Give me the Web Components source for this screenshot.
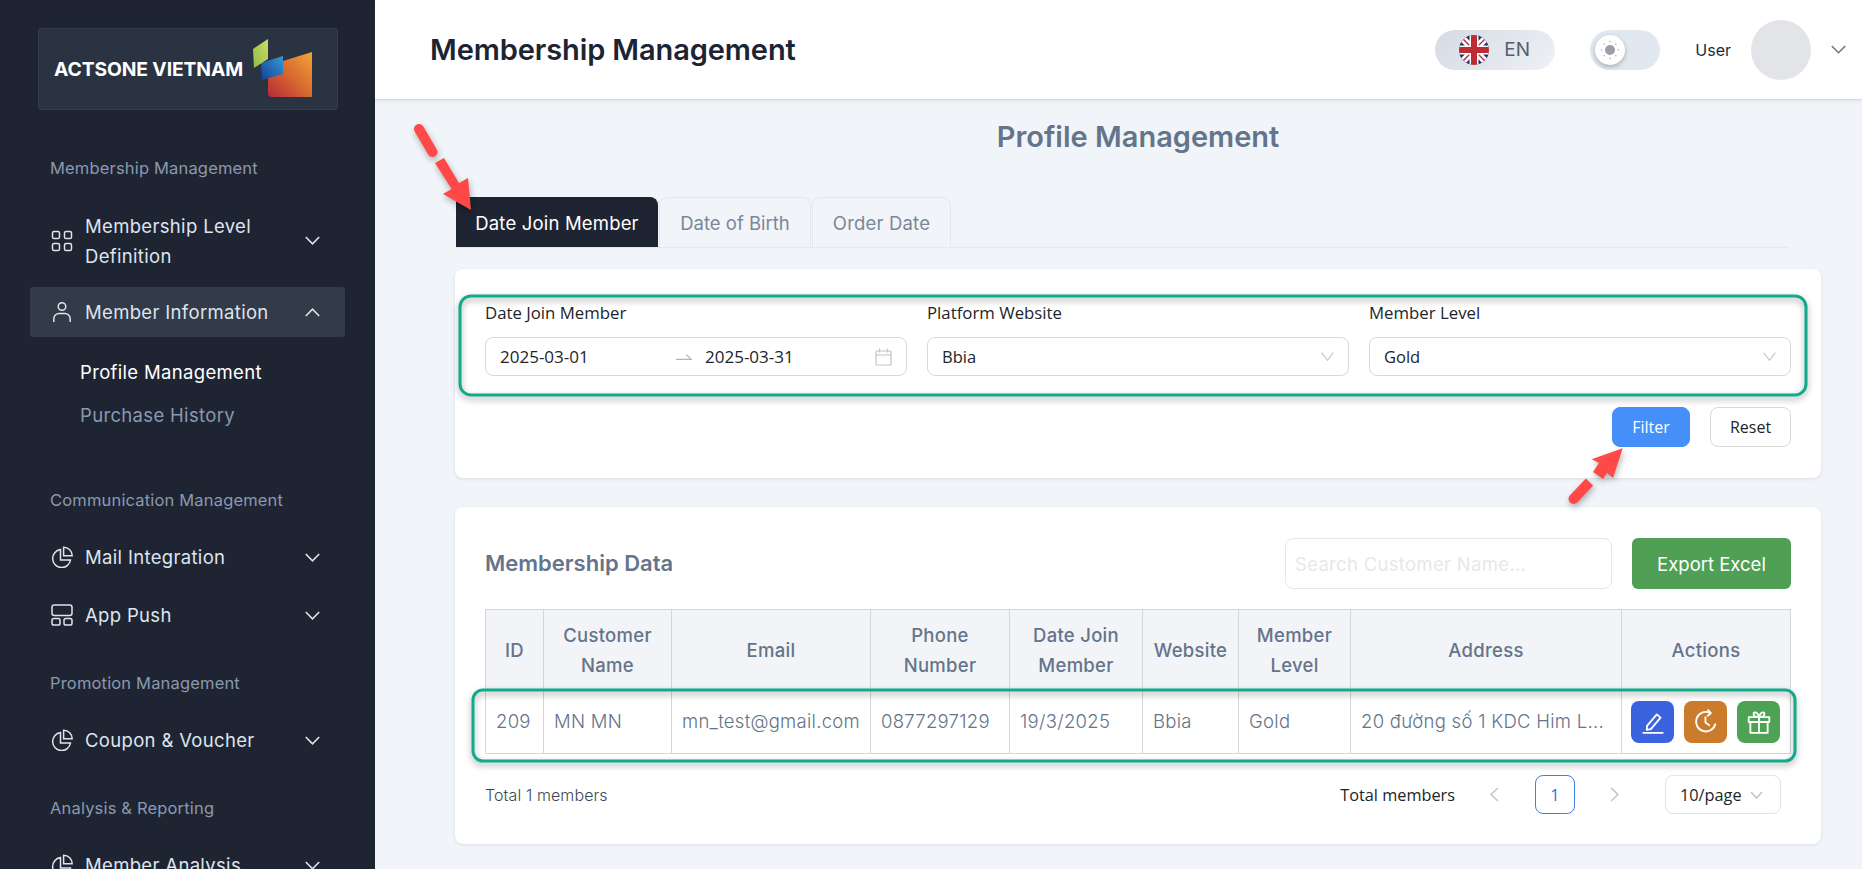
<!DOCTYPE html>
<html lang="en">
<head>
<meta charset="utf-8">
<title>Membership Management</title>
<style>
  html, body { margin: 0; height: 100%; overflow: hidden; background: #f1f5f9; }
  body { font-family: Inter, "Liberation Sans", sans-serif; }
</style>
</head>
<body>
<app-shell>
  <app-sidebar slot="sidebar"></app-sidebar>
  <app-header slot="header" heading="Membership Management"></app-header>
  <profile-page></profile-page>
  <red-marks slot="overlay"></red-marks>
</app-shell>

<script>
const ICONS = {
  grid: '<rect x="1.5" y="1.5" width="7" height="7" rx="1.6"/><rect x="13.5" y="1.5" width="7" height="7" rx="1.6"/><rect x="1.5" y="13.5" width="7" height="7" rx="1.6"/><rect x="13.5" y="13.5" width="7" height="7" rx="1.6"/>',
  user: '<circle cx="11" cy="5.5" r="3.8"/><path d="M2.8 21v-3.2c0-3 2.4-5.3 5.3-5.3h5.8c2.9 0 5.3 2.3 5.3 5.3V21"/>',
  pie: '<path d="M9.5 3.6a9 9 0 1 0 10 10.4h-10z"/><path d="M12.6 1.2v8.6h8.6a8.6 8.6 0 0 0-8.6-8.6z"/>',
  layout: '<rect x="1" y="1" width="20" height="10.5" rx="2.2"/><rect x="1" y="14.6" width="8" height="6.4" rx="1.8"/><rect x="13" y="14.6" width="8" height="6.4" rx="1.8"/>'
};

class AppShell extends HTMLElement {
  constructor() {
    super();
    this.attachShadow({ mode: "open" }).innerHTML = `
      <style>
        :host { display: grid; grid-template-columns: 375px 1fr; grid-template-rows: 100px 1fr; width: 1862px; height: 869px; overflow: hidden; position: relative; }
        .side { grid-row: 1 / 3; overflow: hidden; }
        .main { overflow: hidden; }
      </style>
      <div class="side"><slot name="sidebar"></slot></div>
      <slot name="header"></slot>
      <div class="main"><slot></slot></div>
      <slot name="overlay"></slot>`;
  }
}

class NavItem extends HTMLElement {
  constructor() {
    super();
    this.attachShadow({ mode: "open" });
  }
  connectedCallback() {
    const open = this.hasAttribute("open");
    const icon = ICONS[this.getAttribute("icon")] || "";
    this.shadowRoot.innerHTML = `
      <style>
        :host { display: flex; align-items: center; box-sizing: border-box; min-height: 50px; padding: 0 25px 0 21px; border-radius: 3px; color: #dee4ee; font-size: 18.5px; letter-spacing: .33px; line-height: 30px; }
        :host([open]) { background: #333a48; }
        svg.ic { width: 22px; height: 22px; flex: none; margin-right: 12px; fill: none; stroke: #dee4ee; stroke-width: 1.5; }
        .t { flex: 1; max-width: 195px; }
        svg.ch { margin-left: auto; width: 15px; height: 9px; flex: none; fill: none; stroke: #dee4ee; stroke-width: 1.6; }
      </style>
      <svg class="ic" viewBox="0 0 22 22">${icon}</svg>
      <span class="t"><slot></slot></span>
      <svg class="ch" viewBox="0 0 15 9"><path d="${open ? "M.8 8 7.5 1.2 14.2 8" : "M.8 1 7.5 7.8 14.2 1"}"/></svg>`;
  }
}

class AppSidebar extends HTMLElement {
  constructor() {
    super();
    this.attachShadow({ mode: "open" }).innerHTML = `
      <style>
        :host { display: block; height: 869px; background: #1f2433; color: #8a99af; overflow: hidden; }
        .logo { box-sizing: border-box; margin: 28px 37px 0 38px; height: 82px; background: #2a3342; border: 1px solid #333d4d; border-radius: 3px; display: flex; align-items: center; justify-content: space-between; padding: 0 25px 0 15px; }
        .logo b { color: #fff; font-size: 19.3px; font-weight: 700; letter-spacing: -.1px; white-space: nowrap; }
        .logo svg { width: 60px; height: 60px; flex: none; }
        nav { padding: 0 30px; }
        h3 { margin: 31px 0 20px; padding-left: 20px; font-size: 16.5px; letter-spacing: .17px; font-weight: 400; line-height: 24px; color: #8a99af; }
        h3.first { margin-top: 46px; margin-bottom: 23px; }
        h3.comm { margin-top: 60px; }
        nav-item.two { min-height: 75px; }
        nav-item.active { margin-top: 9px; }
        nav-item.next { margin-top: 8px; }
        .sub { padding: 22px 0 0 50px; display: grid; gap: 17px; font-size: 18.5px; letter-spacing: .33px; line-height: 26px; }
        .sub .on { color: #fff; }
      </style>
      <div class="logo">
        <b>ACTSONE VIETNAM</b>
        <svg viewBox="0 0 60 60" aria-hidden="true">
          <defs>
            <linearGradient id="lg" x1="1" y1="0" x2="0" y2="1"><stop offset="0" stop-color="#cfdc62"/><stop offset="1" stop-color="#8dbd4b"/></linearGradient>
            <linearGradient id="lb" x1="1" y1="0" x2="0" y2="1"><stop offset="0" stop-color="#339ad6"/><stop offset="1" stop-color="#173f96"/></linearGradient>
            <linearGradient id="lo" x1="1" y1="0" x2="0" y2="1"><stop offset="0" stop-color="#f2a53a"/><stop offset=".5" stop-color="#d8692f"/><stop offset="1" stop-color="#b42a36"/></linearGradient>
          </defs>
          <path d="M31 22 60 13V58H20a4 4 0 0 1-4-4V39z" fill="url(#lo)"/>
          <path d="M9 24 31 17V35L10 41z" fill="url(#lb)"/>
          <path d="M1 10 16 0V20L2 29z" fill="url(#lg)"/>
        </svg>
      </div>
      <nav>
        <h3 class="first">Membership Management</h3>
        <nav-item class="two" icon="grid">Membership Level Definition</nav-item>
        <nav-item class="active" icon="user" open>Member Information</nav-item>
        <div class="sub"><span class="on">Profile Management</span><span>Purchase History</span></div>
        <h3 class="comm">Communication Management</h3>
        <nav-item icon="pie">Mail Integration</nav-item>
        <nav-item class="next" icon="layout">App Push</nav-item>
        <h3>Promotion Management</h3>
        <nav-item icon="pie">Coupon &amp; Voucher</nav-item>
        <h3>Analysis &amp; Reporting</h3>
        <nav-item icon="pie">Member Analysis</nav-item>
      </nav>`;
  }
}

class AppHeader extends HTMLElement {
  constructor() {
    super();
    this.attachShadow({ mode: "open" });
  }
  connectedCallback() {
    this.shadowRoot.innerHTML = `
      <style>
        :host { display: flex; align-items: center; box-sizing: border-box; height: 100px; padding: 0 16px 0 55px; background: #fff; border-bottom: 1px solid #d5dbe3; box-shadow: 0 1px 3px rgba(100,116,139,.15); position: relative; }
        h1 { margin: 0; font-size: 29px; font-weight: 600; color: #1c2434; flex: 1; letter-spacing: -.1px; }
        .lang { box-sizing: border-box; width: 120px; height: 40px; border-radius: 20px; background: linear-gradient(135deg,#d5dae3,#eef1f5); display: flex; align-items: center; gap: 15px; padding-left: 24px; color: #555e6e; font-size: 19px; margin-right: 35px; }
        .lang svg { width: 30px; height: 30px; border-radius: 50%; }
        .toggle { box-sizing: border-box; width: 70px; height: 40px; border-radius: 20px; background: #e2e8f0; padding: 5px; margin-right: 35px; }
        .knob { width: 30px; height: 30px; border-radius: 50%; background: #fff; box-shadow: 0 2px 5px rgba(0,0,0,.25); display: flex; align-items: center; justify-content: center; }
        .user { font-size: 16px; color: #212b3d; margin-right: 20px; }
        .avatar { width: 60px; height: 60px; border-radius: 50%; background: #e2e4e8; margin-right: 20px; }
        .chev { width: 15px; height: 9px; fill: none; stroke: #64748b; stroke-width: 1.5; }
      </style>
      <h1>${this.getAttribute("heading")}</h1>
      <div class="lang">
        <svg viewBox="0 0 30 30" aria-hidden="true">
          <rect width="30" height="30" fill="#1a2a6c"/>
          <path d="M0 2 28 30M2 0 30 28M30 2 2 30M28 0 0 28" stroke="#fff" stroke-width="4"/>
          <path d="M0 0 30 30M30 0 0 30" stroke="#c1272d" stroke-width="1.400"/>
          <path d="M15 0v30M0 15h30" stroke="#fff" stroke-width="9"/>
          <path d="M15 0v30M0 15h30" stroke="#bd2c35" stroke-width="6"/>
        </svg>
        <span>EN</span>
      </div>
      <div class="toggle"><div class="knob">
        <svg width="20" height="20" viewBox="0 0 20 20" aria-hidden="true"><circle cx="10" cy="10" r="5" fill="#9b9ea5"/><g fill="#a9acb2"><circle cx="10" cy="1.800" r=".8"/><circle cx="10" cy="18.200" r=".8"/><circle cx="1.800" cy="10" r=".8"/><circle cx="18.200" cy="10" r=".8"/><circle cx="4.200" cy="4.200" r=".8"/><circle cx="15.800" cy="4.200" r=".8"/><circle cx="4.200" cy="15.800" r=".8"/><circle cx="15.800" cy="15.800" r=".8"/></g></svg>
      </div></div>
      <span class="user">User</span>
      <div class="avatar"></div>
      <svg class="chev" viewBox="0 0 15 9"><path d="M.8 1 7.500 7.800 14.200 1"/></svg>`;
  }
}

class FieldBox extends HTMLElement {
  constructor() {
    super();
    this.attachShadow({ mode: "open" });
  }
  connectedCallback() {
    this.shadowRoot.innerHTML = `
      <style>
        :host { display: block; min-width: 0; font-family: "Open Sans", "Liberation Sans", sans-serif; color: #212529; }
        label { display: block; font-size: 16.8px; line-height: 24px; margin-bottom: 12px; }
        .box { box-sizing: border-box; height: 39px; border: 1px solid #d9d9d9; border-radius: 8px; background: #fff; display: flex; align-items: center; padding: 0 14px 0 14px; font-size: 16.5px; }
        svg { margin-left: auto; width: 13px; height: 9px; fill: none; stroke: #c4c4c4; stroke-width: 1.1; }
      </style>
      <label>${this.getAttribute("label")}</label>
      <div class="box"><slot></slot><slot name="end"><svg viewBox="0 0 13 9"><path d="M.7 .7 6.500 8.300 12.300 .7"/></svg></slot></div>`;
  }
}

class ProfilePage extends HTMLElement {
  constructor() {
    super();
    const cols = ["ID|58","Customer<br>Name|128","Email|199","Phone<br>Number|139","Date Join<br>Member|133","Website|96","Member<br>Level|112","Address|271","Actions|169"];
    this.attachShadow({ mode: "open" }).innerHTML = `
      <style>
        :host { display: block; box-sizing: border-box; padding: 0 41px 0 80px; color: #64748b; }
        h2 { margin: 0; text-align: center; font-size: 29px; font-weight: 600; color: #64748b; line-height: 36px; padding-top: 19px; height: 97px; box-sizing: border-box; }
        .tabs { display: flex; gap: 1px; border-bottom: 1px solid #e5e8ec; height: 51px; box-sizing: border-box; margin-right: 33px; font-size: 18.5px; letter-spacing: .18px; }
        .tab { box-sizing: border-box; height: 50px; display: flex; align-items: center; justify-content: center; border: 1px solid #e5e8ec; border-bottom: 0; border-radius: 8px 8px 0 0; color: #7b8798; white-space: nowrap; }
        .tab.on { width: 202px; background: #1f2433; border-color: #1f2433; color: #fff; border-top-left-radius: 0; margin-left: 1px; }
        .tab.b { width: 152px; letter-spacing: 0; }
        .tab.o { width: 139px; }
        .card { background: #fff; border-radius: 8px; box-shadow: 0 1px 3px rgba(100,116,139,.18); }
        .filter { margin-top: 21px; height: 209px; padding: 32px 30px 0 30px; box-sizing: border-box; }
        .fields { display: grid; grid-template-columns: repeat(3, 1fr); gap: 20px; }
        .range { display: flex; align-items: center; width: 100%; font-size: 17px; white-space: nowrap; }
        .range svg { margin: 0 13px 0 0; width: 16px; height: 6px; fill: none; stroke: #b5b5b5; stroke-width: 1.2; flex: none; }
        .range span:first-child { width: 176px; flex: none; }
        .btns { display: flex; justify-content: flex-end; gap: 20px; margin-top: 31px; font-family: "Open Sans", "Liberation Sans", sans-serif; font-size: 16px; }
        .btn { box-sizing: border-box; width: 81px; height: 40px; border-radius: 8px; display: flex; align-items: center; justify-content: center; border: 1px solid #d9d9d9; color: #212529; }
        .btn.pri { width: 78px; background: #4490f8; border-color: #4490f8; color: #fff; }
        .data { margin-top: 29px; height: 337px; box-sizing: border-box; padding: 31px 30px 0 30px; }
        .top { display: flex; align-items: center; height: 51px; }
        .top h4 { margin: 0 auto 0 0; font-size: 22px; font-weight: 600; color: #64748b; position: relative; top: -1px; }
        .search { box-sizing: border-box; width: 327px; height: 51px; border: 1px solid #e5e7eb; border-radius: 8px; padding: 0 9px; display: flex; align-items: center; color: #e6e8ec; font-size: 18.5px; letter-spacing: .3px; margin-right: 20px; }
        .export { width: 159px; height: 51px; background: #4f9f54; color: #fff; border-radius: 6px; display: flex; align-items: center; justify-content: center; font-size: 18.5px; }
        table { margin-top: 20px; border-collapse: collapse; table-layout: fixed; width: 1305px; font-size: 18.5px; letter-spacing: .28px; }
        th, td { border: 1px solid #d3d6dc; padding: 0 10px; }
        th { height: 80px; background: #f2f4f7; font-weight: 500; line-height: 30px; color: #64748b; }
        td { height: 63px; white-space: nowrap; font-weight: 300; padding-bottom: 2px; box-sizing: border-box; }
        .acts { display: flex; gap: 10px; padding: 0; }
        td.a { padding: 0 0 0 9px; }
        .act { width: 43px; height: 42px; border-radius: 8px; display: flex; align-items: center; justify-content: center; }
        .act svg { width: 26px; height: 26px; fill: none; stroke: #fff; stroke-width: 1.7; stroke-linecap: round; stroke-linejoin: round; }
        .foot { display: flex; align-items: center; height: 39px; margin-top: 21px; font-size: 16px; }
        .foot .total { margin-right: auto; font-weight: 300; color: #3c4757; letter-spacing: .1px; }
        .pager { display: flex; align-items: center; font-family: "Open Sans", "Liberation Sans", sans-serif; color: #212529; margin-right: 10px; font-size: 16.3px; }
        .pager svg { width: 9px; height: 15px; fill: none; stroke: #bcbcbc; stroke-width: 1.2; }
        .cur { box-sizing: border-box; width: 40px; height: 39px; border: 1px solid #3f7fe8; border-radius: 8px; color: #2f6fe0; display: flex; align-items: center; justify-content: center; margin: 0 35px 0 36px; }
        .size { box-sizing: border-box; width: 116px; height: 39px; border: 1px solid #e3e3e3; border-radius: 8px; display: flex; align-items: center; gap: 8px; padding-left: 14px; margin-left: 46px; }
        .size svg { width: 13px; height: 8px; }
      </style>
      <h2>Profile Management</h2>
      <div class="tabs">
        <div class="tab on">Date Join Member</div>
        <div class="tab b">Date of Birth</div>
        <div class="tab o">Order Date</div>
      </div>
      <section class="card filter">
        <div class="fields">
          <field-box label="Date Join Member">
            <div class="range"><span>2025-03-01</span><svg viewBox="0 0 16 6"><path d="M0 5.400h15.400L10.500 .8"/></svg><span>2025-03-31</span></div>
            <svg slot="end" width="17" height="18" viewBox="0 0 17 18" fill="none" stroke="#c4c4c4" stroke-width="1.200" style="flex:none"><rect x="1" y="3" width="15" height="14" rx="1"/><path d="M1 7h15M4.500 .5v4M12.500 .5v4"/></svg>
          </field-box>
          <field-box label="Platform Website">Bbia</field-box>
          <field-box label="Member Level">Gold</field-box>
        </div>
        <div class="btns"><div class="btn pri">Filter</div><div class="btn">Reset</div></div>
      </section>
      <section class="card data">
        <div class="top">
          <h4>Membership Data</h4>
          <div class="search">Search Customer Name...</div>
          <div class="export">Export Excel</div>
        </div>
        <table>
          <colgroup>${cols.map(c => `<col style="width:${c.split("|")[1]}px">`).join("")}</colgroup>
          <tr>${cols.map(c => `<th>${c.split("|")[0]}</th>`).join("")}</tr>
          <tr>
            <td>209</td><td>MN MN</td><td>mn_test@gmail.com</td><td>0877297129</td><td>19/3/2025</td><td>Bbia</td><td>Gold</td>
            <td>20 đường số 1 KDC Him L...</td>
            <td class="a"><div class="acts">
              <div class="act" style="background:#3b63e0"><svg viewBox="0 0 24 24"><path d="M6.500 15.500 15.500 5l3.500 3-9 10.500-3.800.8z"/><path d="M3 22h18"/></svg></div>
              <div class="act" style="background:#cb7b2c"><svg viewBox="0 0 24 24"><path d="M20.500 14a9 9 0 1 1-5-10.500"/><path d="M14 1l2.500 2.800-2.800 2.400"/><path d="M11.500 7.500v5l3.500 2.500"/></svg></div>
              <div class="act" style="background:#4ea254"><svg viewBox="0 0 24 24"><rect x="2.500" y="7.500" width="19" height="4.500"/><rect x="4" y="12" width="16" height="10"/><path d="M12 7.500V22M12 7.500C9 7.500 7 6.500 7 4.500s3.500-2.500 5 3zM12 7.500c3 0 5-1 5-3s-3.500-2.500-5 3z"/></svg></div>
            </div></td>
          </tr>
        </table>
        <div class="foot">
          <span class="total">Total 1 members</span>
          <span class="pager">
            <span style="margin-right:35px;">Total members</span>
            <svg viewBox="0 0 9 15"><path d="M8 1 1 7.500 8 14"/></svg>
            <span class="cur">1</span>
            <svg viewBox="0 0 9 15"><path d="M1 1 8 7.500 1 14"/></svg>
            <span class="size">10/page <svg viewBox="0 0 13 8" fill="none" stroke="#bcbcbc" stroke-width="1.200"><path d="M1 1 6.500 7 12 1"/></svg></span>
          </span>
        </div>
      </section>`;
  }
}

// red arrows and green outlines someone drew on top of the screenshot
class RedMarks extends HTMLElement {
  constructor() {
    super();
    this.attachShadow({ mode: "open" }).innerHTML = `
      <style>
        :host { position: absolute; inset: 0; pointer-events: none; }
        svg { position: absolute; left: 0; top: 0; }
        .mark { fill: none; stroke: #10ab8d; stroke-width: 3; filter: drop-shadow(0 3px 3px rgba(0,0,0,.35)); }
        .arrow { filter: drop-shadow(1px 3px 3px rgba(0,0,0,.3)); }
      </style>
      <svg width="1862" height="869" viewBox="0 0 1862 869">
        <rect class="mark" x="460" y="296" width="1346" height="99" rx="11"/>
        <rect class="mark" x="473" y="690" width="1322" height="71" rx="10"/>
        <g class="arrow" fill="#ff4848">
          <path d="M419 129 432.500 152" stroke="#ff4848" stroke-width="10" stroke-linecap="round" fill="none"/>
          <path d="M435 163 444 158 459 183 468 178 471 210 443 194 451.600 189z"/>
          <path d="M1622.700 448.300 1591.700 459.300 1599 463 1593 472 1603 479 1607 473 1613 478z"/>
          <path d="M1589.500 482 1573.500 499" stroke="#ff4848" stroke-width="10" fill="none"/>
          <circle cx="1573.500" cy="499" r="5"/>
        </g>
      </svg>`;
  }
}

customElements.define("app-shell", AppShell);
customElements.define("nav-item", NavItem);
customElements.define("app-sidebar", AppSidebar);
customElements.define("app-header", AppHeader);
customElements.define("field-box", FieldBox);
customElements.define("profile-page", ProfilePage);
customElements.define("red-marks", RedMarks);
</script>
</body>
</html>
